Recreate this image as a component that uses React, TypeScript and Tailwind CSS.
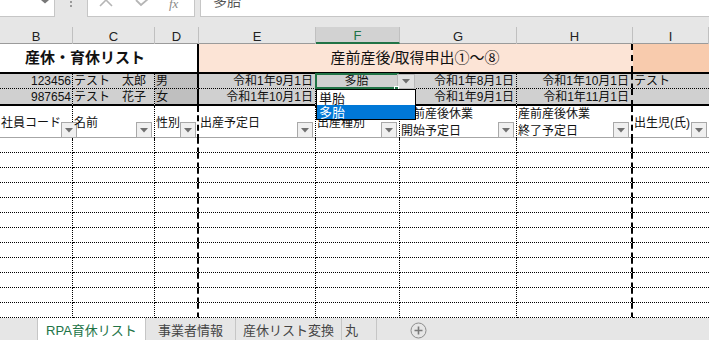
import React from 'react'

const cols = 'grid grid-cols-[73px_82px_44px_117px_84px_117px_116px_76px]'

function FilterBtn() {
  return (
    <div className="w-[16px] h-[16px] shrink-0 border border-[#a9a9a9] bg-[#f0f0f0] flex items-center justify-center">
      <svg width="8" height="5" viewBox="0 0 8 5">
        <path d="M0 0 H8 L4 4.5 Z" fill="#6f6f6f" />
      </svg>
    </div>
  )
}

function HeadCell({ lines, cls }: { lines: string[]; cls: string }) {
  return (
    <div className={`flex items-center justify-between pl-[1px] pr-[2px] border-black ${cls}`}>
      <div className="text-[12px] leading-[17px] whitespace-nowrap overflow-visible">
        {lines.map((l) => (
          <div key={l}>{l}</div>
        ))}
      </div>
      <div className="self-end mb-[2px]">
        <FilterBtn />
      </div>
    </div>
  )
}

function Formula() {
  return (
    <div className="h-[27px] bg-[#e6e6e6]">
      <div className="flex h-[17px]">
        <div className="w-[55px] bg-white border-r border-b border-[#c6c6c6] relative">
          <svg className="absolute left-[41px] top-0" width="8" height="4" viewBox="0 0 8 4">
            <path d="M0 0 H8 L4 3.5 Z" fill="#777" />
          </svg>
        </div>
        <div className="w-[32px] flex justify-center">
          <div className="flex flex-col gap-[2px] pt-[1px]">
            <div className="w-[2px] h-[2px] bg-[#9a9a9a]" />
            <div className="w-[2px] h-[2px] bg-[#9a9a9a]" />
          </div>
        </div>
        <div className="w-[108px] bg-white border border-t-0 border-[#c6c6c6] flex items-start overflow-hidden text-[#b5b5b5]">
          <svg className="ml-[11px] -mt-[3px]" width="14" height="10" viewBox="0 0 14 10">
            <path d="M1 9 L7 3 L13 9" stroke="currentColor" strokeWidth="1.6" fill="none" />
          </svg>
          <svg className="ml-[22px] -mt-[1px]" width="14" height="9" viewBox="0 0 14 9">
            <path d="M1 1 L6 6 L13 0" stroke="currentColor" strokeWidth="1.8" fill="none" />
          </svg>
          <span className="ml-[20px] -mt-[6px] italic text-[13px] text-[#8a8a8a] font-['Liberation_Serif',serif]">fx</span>
        </div>
        <div className="w-[5px]" />
        <div className="flex-1 bg-white border-l border-b border-[#c6c6c6] overflow-hidden">
          <div className="ml-[12px] -mt-[9px] text-[14px] text-[#555]">多胎</div>
        </div>
      </div>
    </div>
  )
}

function ColHeader() {
  const letters = ['B', 'C', 'D', 'E', 'F', 'G', 'H', 'I']
  return (
    <div className={`${cols} h-[17px] bg-[#e6e6e6] border-b border-[#9b9b9b]`}>
      {letters.map((l) =>
        l === 'F' ? (
          <div key={l} className="bg-[#d2d2d2] border-b-2 border-[#217346] border-r border-r-[#c0c0c0] flex items-center justify-center text-[13px] text-[#217346] leading-none pt-[2px]">
            {l}
          </div>
        ) : (
          <div key={l} className="border-r border-[#c0c0c0] flex items-center justify-center text-[13px] text-[#222] leading-none pt-[2px]">
            {l}
          </div>
        )
      )}
    </div>
  )
}

type Rec = { code: string; name: string; sex: string; e: string; f: string; g: string; h: string; i: string }

const recs: Rec[] = [
  { code: '123456', name: 'テスト　太郎', sex: '男', e: '令和1年9月1日', f: '多胎', g: '令和1年8月1日', h: '令和1年10月1日', i: 'テスト' },
  { code: '987654', name: 'テスト　花子', sex: '女', e: '令和1年10月1日', f: '', g: '令和1年9月1日', h: '令和1年11月1日', i: '' },
]

function DataRow({ r, last }: { r: Rec; last: boolean }) {
  const bottom = last ? 'border-b-2' : 'border-b'
  const h = last ? 'h-[17px]' : 'h-[15px]'
  const base = 'flex items-center text-[12px] leading-none whitespace-nowrap overflow-hidden'
  const cellBorder = last
    ? 'border-r border-b-2 border-black [border-style:none_dotted_solid_none]'
    : 'border-r border-b border-black border-dotted'
  return (
    <div className={`${cols} ${h}`}>
      <div className={`${base} ${cellBorder} bg-[#d0d0d0] justify-end pr-[1px]`}>{r.code}</div>
      <div className={`${base} ${cellBorder} bg-[#d0d0d0] pl-[1px]`}>{r.name}</div>
      <div
        className={`${base} bg-[#bfbfbf] pl-[1px] border-r-2 border-black ${bottom} ${
          last ? '[border-style:none_solid_solid_none]' : '[border-style:none_solid_dotted_none]'
        }`}
      >
        {r.sex}
      </div>
      <div className={`${base} ${cellBorder} bg-[#d0d0d0] justify-end pr-[2px]`}>{r.e}</div>
      <div className={`${base} ${cellBorder} bg-[#d0d0d0] justify-center relative overflow-visible`}>
        {r.f && (
          <>
            <span className="pr-[2px]">{r.f}</span>
            <div className="absolute -left-[1px] -top-[1px] w-[84px] h-[16px] border-2 border-[#217346]" />
            <div className="absolute left-[81px] top-0 w-[18px] h-[15px] bg-[#e1e1e1] border border-[#b9b9b9] flex items-center justify-center z-10">
              <svg width="8" height="5" viewBox="0 0 8 5">
                <path d="M0 0 H8 L4 4.5 Z" fill="#6f6f6f" />
              </svg>
            </div>
            <div className="absolute left-[78px] top-[12px] w-[5px] h-[5px] bg-[#217346] border border-white z-10" />
            <div className="absolute left-0 top-[15px] w-[100px] h-[31px] bg-white border border-black z-20 flex flex-col text-[13px] leading-none">
              <div className="h-[14px] flex items-center pl-[2px] mt-[1px]">単胎</div>
              <div className="h-[14px] flex items-center pl-[2px] bg-[#0078d7] text-white">多胎</div>
            </div>
          </>
        )}
      </div>
      <div className={`${base} ${cellBorder} bg-[#d0d0d0] justify-end pr-[2px]`}>{r.g}</div>
      <div
        className={`${base} bg-[#d0d0d0] justify-end pr-[2px] border-r-2 border-black ${bottom} ${
          last ? '[border-style:none_dashed_solid_none]' : '[border-style:none_dashed_dotted_none]'
        }`}
      >
        {r.h}
      </div>
      <div className={`${base} bg-[#d0d0d0] pl-[1px] border-black ${last ? 'border-b-2' : 'border-b border-dotted'}`}>{r.i}</div>
    </div>
  )
}

function EmptyRow() {
  const dotted = 'border-r border-b border-black border-dotted'
  const dashed = 'border-r-2 border-b border-black [border-style:none_dashed_dotted_none]'
  return (
    <div className={`${cols} h-[15px]`}>
      <div className={dotted} />
      <div className={dotted} />
      <div className={dashed} />
      <div className={dotted} />
      <div className={dotted} />
      <div className={dotted} />
      <div className={dashed} />
      <div className="border-b border-black border-dotted" />
    </div>
  )
}

function Tabs() {
  const tab = 'h-full flex items-center justify-center pt-[3px] border-r border-[#c6c6c6] text-[13px]'
  return (
    <div className="h-[22px] bg-[#e6e6e6] flex">
      <div className="w-[38px] border-r border-[#c6c6c6]" />
      <div className={`${tab} w-[108px] bg-white text-[#217346]`}>RPA育休リスト</div>
      <div className={`${tab} w-[90px] text-[#444]`}>事業者情報</div>
      <div className={`${tab} w-[106px] text-[#444]`}>産休リスト変換</div>
      <div className={`${tab} w-[35px] text-[#444] justify-start pl-[3px]`}>丸</div>
      <div className="ml-[33px] pt-[4px]">
        <svg width="17" height="17" viewBox="0 0 17 17">
          <circle cx="8.5" cy="8.5" r="7.5" fill="none" stroke="#8d8d8d" strokeWidth="1" />
          <path d="M8.5 4.5 V12.5 M4.5 8.5 H12.5" stroke="#7a7a7a" strokeWidth="1.6" />
        </svg>
      </div>
    </div>
  )
}

export default function App() {
  const dotR = 'border-r border-black border-dotted'
  const dashR = 'border-r-2 border-black border-dashed'
  return (
    <div className="w-[709px] h-[340px] overflow-hidden bg-white text-[#111] font-['Liberation_Sans','Noto_Sans_CJK_JP',sans-serif]">
      <Formula />
      <ColHeader />

      {/* title row */}
      <div className={`${cols} h-[30px] border-b-2 border-black`}>
        <div className="col-span-3 border-r-2 border-black flex items-center pl-[25px] text-[15px] font-bold">
          産休・育休リスト
        </div>
        <div className="col-span-4 bg-[#fce4d6] flex items-center justify-center text-[15px] border-r-2 border-black border-dashed">
          産前産後/取得申出①～⑧
        </div>
        <div className="bg-[#f8cbad]" />
      </div>

      <div className="relative z-10">
        {recs.map((r, i) => (
          <DataRow key={r.code} r={r} last={i === recs.length - 1} />
        ))}
      </div>

      {/* header row */}
      <div className={`${cols} h-[32px] border-b border-[#a6a6a6]`}>
        <HeadCell lines={['社員コード']} cls={dotR} />
        <HeadCell lines={['名前']} cls={dotR} />
        <HeadCell lines={['性別']} cls={dashR} />
        <HeadCell lines={['出産予定日']} cls={dotR} />
        <HeadCell lines={['出産種別']} cls={dotR} />
        <HeadCell lines={['産前産後休業', '開始予定日']} cls={dotR} />
        <HeadCell lines={['産前産後休業', '終了予定日']} cls={dashR} />
        <HeadCell lines={['出生児(氏)']} cls="" />
      </div>

      {Array.from({ length: 12 }).map((_, i) => (
        <EmptyRow key={i} />
      ))}

      <Tabs />
    </div>
  )
}
